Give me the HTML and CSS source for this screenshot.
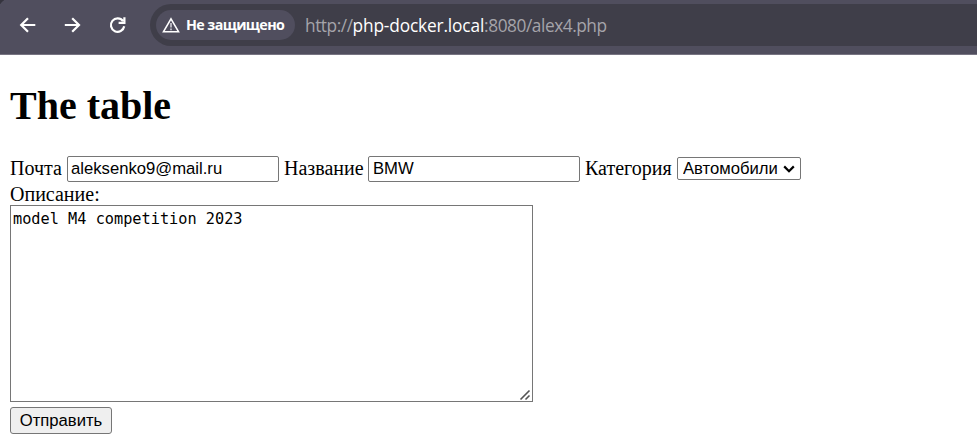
FILE: index.html
```html
<!DOCTYPE html>
<html lang="ru">
<head>
<meta charset="utf-8">
<title>The table</title>
<link rel="stylesheet" href="styles.css">
</head>
<body>
<header class="toolbar">
  <nav class="nav">
    <svg class="icon" viewBox="0 0 20 20"><path d="M17.3 10H3.5M10 3.2 3.2 10l6.8 6.8"/></svg>
    <svg class="icon" viewBox="0 0 20 20"><path d="M1.8 10h13.8M9.2 3.2l6.8 6.8-6.8 6.8"/></svg>
    <svg class="icon" viewBox="0 0 20 20"><path d="M16.2 11.2A6.7 6.7 0 1 1 15 6.1M16.4 2.3v5.5h-5.8"/></svg>
  </nav>
  <div class="address">
    <div class="security">
      <svg class="warning" viewBox="0 0 18 16"><path d="M9 1.8 16.5 14.7h-15Z"/><path class="mark" d="M9 6v4.5M9 11.5v1.7"/></svg>
      <span class="security-label">Не защищено</span>
    </div>
    <div class="url">http://<span class="host">php-docker.local</span>:8080/alex4.php</div>
  </div>
</header>
<main class="page">
  <h1 class="title">The table</h1>
  <form class="form">
    <div class="row">
      <label class="label label-mail" for="mail">Почта</label>
      <input class="field" id="mail" type="text" value="aleksenko9@mail.ru">
      <label class="label label-name" for="name">Название</label>
      <input class="field" id="name" type="text" value="BMW">
      <label class="label label-category" for="category">Категория</label>
      <div class="select-wrap">
        <select class="select" id="category"><option>Автомобили</option></select>
        <svg class="chevron" viewBox="0 0 12 8"><path d="M1.2 1.4 6 6.2l4.8-4.8"/></svg>
      </div>
    </div>
    <label class="label description" for="text">Описание:</label>
    <div class="area-wrap">
      <textarea class="area" id="text" spellcheck="false">model M4 competition 2023</textarea>
      <svg class="grip" viewBox="0 0 12 12"><path d="M1.5 10.5l9-9M6.5 10.5l4-4"/></svg>
    </div>
    <button class="submit" type="button">Отправить</button>
  </form>
</main>
</body>
</html>
```
FILE: styles.css
```css
* { box-sizing: border-box; }
body {
  margin: 0;
  height: 436px;
  overflow: hidden;
  background: #fff;
  color: #000;
  font: 20px/23px "Liberation Serif", serif;
}
.toolbar {
  display: flex;
  height: 55px;
  padding: 4px 0 0;
  background: radial-gradient(circle at 8px 8px, #504e5e 8px, #35343e 9px) 0 0 / 4px 4px no-repeat, #504e5e;
  border-bottom: 1px solid #777482;
}
.nav {
  display: flex;
  gap: 25px;
  width: 150px;
  padding: 11px 0 0 18px;
}
.icon {
  width: 20px;
  height: 20px;
  fill: none;
  stroke: #fff;
  stroke-width: 2.2;
}
.address {
  display: flex;
  align-items: center;
  flex: 1;
  height: 42px;
  padding-left: 6px;
  border-radius: 21px 0 0 21px;
  background: #3f3e49;
}
.security {
  display: flex;
  align-items: center;
  width: 139px;
  height: 30px;
  padding-left: 6px;
  border-radius: 15px;
  background: #504e5e;
  color: #fff;
}
.warning {
  width: 18px;
  height: 16px;
  fill: none;
  stroke: #fff;
  stroke-width: 1.6;
}
.mark { stroke-width: 1.5; stroke: #d5d4da; }
.security-label {
  margin-left: 6px;
  font: 700 14.3px/20px "Open Sans", sans-serif;
  letter-spacing: -0.6px;
  white-space: nowrap;
}
.url {
  margin: 2px 0 0 10px;
  color: #a5a4aa;
  font: 17.3px/24px "Open Sans", sans-serif;
  letter-spacing: -0.45px;
  white-space: nowrap;
}
.host { color: #fff; letter-spacing: -0.15px; }
.page { padding: 28px 10px 0; }
.title {
  margin: 0;
  font-size: 40px;
  line-height: 46px;
}
.form { padding-top: 26px; }
.row {
  display: flex;
  height: 27px;
  align-items: flex-start;
}
.label { white-space: nowrap; }
.label-mail { width: 57px; }
.label-name { width: 84px; margin-left: 5px; }
.label-category { width: 92px; margin-left: 5px; }
.row .label { padding-top: 2px; }
.field {
  width: 212px;
  height: 26px;
  margin: 1px 0 0;
  padding: 0 3px;
  border: 1px solid #767676;
  border-radius: 2px;
  background: #fff;
  color: #000;
  font: 16.67px "Liberation Sans", sans-serif;
}
#name { padding-left: 4px; }
.select-wrap { position: relative; padding-top: 2px; }
.select {
  display: block;
  width: 124px;
  height: 23px;
  padding: 0 5px;
  appearance: none;
  border: 1px solid #767676;
  border-radius: 2px;
  background: #fff;
  color: #000;
  font: 16.67px "Liberation Sans", sans-serif;
}
.chevron {
  position: absolute;
  right: 6px;
  top: 10px;
  width: 12px;
  height: 8px;
  fill: none;
  stroke: #000;
  stroke-width: 2.2;
}
.description { display: block; height: 23px; padding-top: 1px; }
.area-wrap { position: relative; width: 523px; height: 197px; }
.area {
  display: block;
  width: 523px;
  height: 197px;
  margin: 0;
  padding: 3px 2px;
  resize: none;
  border: 1px solid #767676;
  background: #fff;
  color: #000;
  font: 15.25px/20px "DejaVu Sans Mono", monospace;
}
.grip {
  position: absolute;
  right: 2px;
  bottom: 1px;
  width: 12px;
  height: 12px;
  fill: none;
  stroke: #555;
  stroke-width: 1.6;
}
.submit {
  display: block;
  width: 102px;
  height: 27px;
  margin: 5px 0 0;
  padding: 0;
  border: 1px solid #767676;
  border-radius: 3px;
  background: #efefef;
  color: #000;
  font: 16.67px "Liberation Sans", sans-serif;
}
```
